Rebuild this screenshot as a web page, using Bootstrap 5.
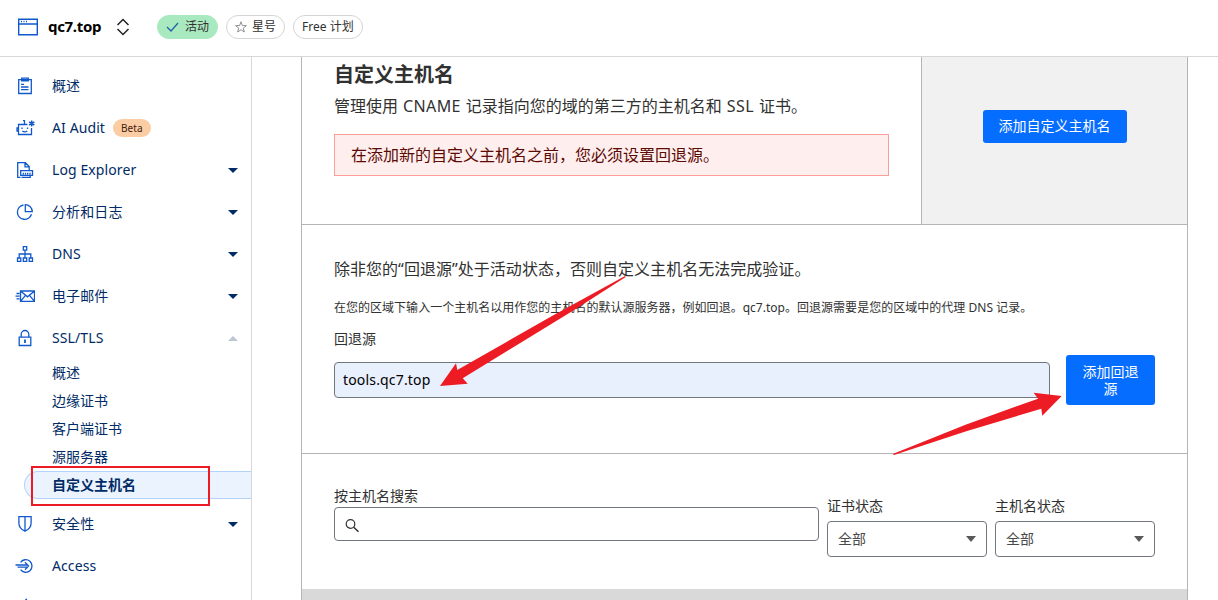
<!DOCTYPE html>
<html lang="zh-CN">
<head>
<meta charset="utf-8">
<meta name="viewport" content="width=device-width, initial-scale=1">
<title>qc7.top - 自定义主机名</title>
<link href="https://cdn.jsdelivr.net/npm/bootstrap@5.3.0/dist/css/bootstrap.min.css" rel="stylesheet">
<style>
  html, body { height: 100%; }
  body { font-family: "Noto Sans", "Noto Sans CJK SC", sans-serif; font-size: 14px; line-height: 20px; color: #313131; overflow: hidden; background: #fff; }
  svg { display: block; flex: none; }
  .ic { fill: none; stroke: #1159cb; stroke-width: 1.3; }
  .topbar { height: 57px; border-bottom: 1px solid #d5d7d8; padding: 0 0 3px 18px; flex: none; }
  .site-name { font-size: 15px; font-weight: 700; color: #000; margin-left: 10px; width: 54px; letter-spacing: -.32px; padding-bottom: 2px; }
  .switcher { margin-left: 14px; }
  .tags { margin-left: 27px; }
  .tag { height: 24px; border: 1px solid #d5d5d5; border-radius: 12px; font-size: 12px; line-height: 22px; font-weight: 400; color: #313131; padding: 0 8px; }
  .tag svg { margin-right: 5px; }
  .tag-on { background: #a9e9c0; border-color: #a9e9c0; }
  .side { width: 252px; border-right: 1px solid #d5d7d8; padding-top: 8px; flex: none; }
  .side-item { height: 42px; padding: 0 13px 0 15px; flex: none; text-decoration: none; color: #002b66; letter-spacing: .1px; }
  .side-item > span:first-of-type { margin-left: 17px; }
  .beta { background: #fbcda5; color: #43200a; font-size: 10px; line-height: 18px; border-radius: 9px; padding: 0 8px; margin-left: 8px; }
  .caret { width: 0; height: 0; border: 5px solid transparent; border-top-color: #002b66; border-bottom: 0; margin-left: auto; }
  .caret.up { border-top: 0; border-bottom: 5px solid #bcc6d4; }
  .sub-item { height: 28px; line-height: 28px; padding-left: 28px; margin-left: 24px; color: #002b66; text-decoration: none; display: block; }
  .sub-item.on { background: #ebf3fe; border: 1px solid #b3d3fb; border-right: 0; border-radius: 14px 0 0 14px; font-weight: 700; line-height: 25px; padding-left: 27px; }
  .panel { width: 887px; margin-left: 49px; border: solid #b5b5b5; border-width: 0 1px; flex: none; }
  .intro { height: 168px; border-bottom: 1px solid #b5b5b5; }
  .intro-text { width: 619px; padding: 3px 32px 0; }
  .intro-text h1 { font-size: 20px; line-height: 30px; font-weight: 700; margin: 0; }
  .intro-text p { font-size: 16px; line-height: 24px; margin: 4px 0 16px; word-spacing: .8px; }
  .intro-text p span { letter-spacing: .4px; }
  .warn { height: 42px; background: #ffeeee; border: 1px solid #fb9f98; color: #5b0a04; font-size: 16px; line-height: 40px; padding: 0 16px; }
  .intro-act { background: #f1f1f1; border-left: 1px solid #b5b5b5; padding-top: 53px; }
  .act { background: #056dff; border: 0; border-radius: 3px; color: #fff; font-size: 14px; line-height: 17px; padding: 8px 15px; }
  .intro-act .act { padding: 7px 16px 9px; width: 144px; padding-left: 0; padding-right: 0; }
  .origin { height: 229px; border-bottom: 1px solid #b5b5b5; padding: 32px 32px 0; }
  .origin-lead { font-size: 16px; line-height: 24px; margin: 0; letter-spacing: .03px; }
  .hint { font-size: 12px; line-height: 18px; margin: 18px 0 12px; white-space: nowrap; letter-spacing: .02px; }
  .origin-row { margin-top: 6px; }
  .field { border: 1px solid #72777d; border-radius: 4px; color: #000; font-size: 14px; padding: 0 8px; }
  .field:focus { box-shadow: none; }
  .field-origin { width: 716px; height: 36px; background: #e8effd; letter-spacing: .17px; padding-bottom: 1px; }
  .filters { height: 135px; padding: 32px 32px 0; }
  .field-search { width: 485px; height: 34px; margin-top: 1px; }
  .field-search svg { margin: 3px 0 0 2px; }
  .pick-col { margin-top: 10px; }
  .pick { width: 160px; height: 36px; color: #4a4a4a; padding: 0 10px; margin-top: 5px; }
  .pick .caret { border-width: 6px 5.5px 0; border-top-color: #595959; }
  .table-top { background: #d9d9d9; height: 40px; }
  .marks { position: absolute; left: 0; top: 0; pointer-events: none; }
</style>
</head>
<body class="d-flex flex-column">
<header class="topbar d-flex align-items-center">
  <svg class="ic" width="20" height="18" viewBox="0 0 20 18"><path d="M.7 1.2h18.6v15.600H.7zM.7 6h18.600M3 3.500h1M5.500 3.500h1M8 3.500h1" stroke-width="1.400"/></svg>
  <span class="site-name">qc7.top</span>
  <svg class="switcher" width="14" height="18" viewBox="0 0 14 18" fill="none" stroke="#222" stroke-width="1.5"><path d="M1.500 7 7 1.500 12.500 7M1.500 11 7 16.500 12.500 11"/></svg>
  <div class="tags d-flex gap-2">
    <span class="tag tag-on d-flex align-items-center"><svg width="14" height="12" viewBox="0 0 14 12" fill="none" stroke="#1c5fa8" stroke-width="1.2"><path d="M1 6l4 4 7-8"/></svg>活动</span>
    <span class="tag d-flex align-items-center"><svg width="12" height="12" viewBox="0 0 14 14" fill="none" stroke="#7d7d7d" stroke-width="1"><path d="M7 .9l1.600 4.400 4.700.1-3.700 2.900 1.300 4.500L7 10.200l-3.900 2.600 1.300-4.500L.7 5.400l4.700-.1z"/></svg>星号</span>
    <span class="tag">Free 计划</span>
  </div>
</header>

<div class="d-flex flex-grow-1 overflow-hidden">
  <nav class="side d-flex flex-column">
    <a class="side-item d-flex align-items-center" href="#"><svg class="ic" width="20" height="20" viewBox="0 0 20 20"><path d="M3.700 3.700h12.600v13.800H3.700zM6.700 2.200h6.600v2.600H6.700zM6 8.300h3M6 11h7.500M6 13.700h7.500"/></svg><span>概述</span></a>
    <a class="side-item d-flex align-items-center" href="#"><svg class="ic" width="20" height="20" viewBox="0 0 20 20"><path d="M12.500 6.500H3.500v10h13V10M9.500 6.500V2.500M8 2.700h2M3.200 10H2v3h1.200M7 9.500v1.600M12.500 9.500v1.600M7.300 13c1.500 1.100 3.500 1.100 5 0"/><path d="M16.700 2.500v6M14.100 4l5.200 3M19.300 4l-5.200 3" stroke-width="1.500"/></svg><span>AI Audit</span><span class="beta">Beta</span></a>
    <a class="side-item d-flex align-items-center" href="#"><svg class="ic" width="20" height="20" viewBox="0 0 20 20"><path d="M5.500 17.300H2.700V2.700h7.600l3.900 3.900V10M10 2.700v4.200h4.200M5.700 10.600h11.800v4.800H5.700zM6.500 17.300h8.700v-2M8.300 14.500v-1.700M10.500 14.500v-1.700M12.700 14.500v-1.700M15 14.500v-1.700"/></svg><span>Log Explorer</span><i class="caret"></i></a>
    <a class="side-item d-flex align-items-center" href="#"><svg class="ic" width="20" height="20" viewBox="0 0 20 20"><path d="M8.500 3a7.200 7.200 0 1 0 8 9.200M10.300 2.700v7h7a7 7 0 0 0-7-7z"/></svg><span>分析和日志</span><i class="caret"></i></a>
    <a class="side-item d-flex align-items-center" href="#"><svg class="ic" width="20" height="20" viewBox="0 0 20 20"><path d="M8.300 2.700h3.400v3.400H8.300zM2.500 14h3.300v3.300H2.500zM8.300 14h3.400v3.300H8.300zM14.200 14h3.300v3.300h-3.300zM10 6.200V14M4.200 14v-4h11.600v4"/></svg><span>DNS</span><i class="caret"></i></a>
    <a class="side-item d-flex align-items-center" href="#"><svg class="ic" width="20" height="20" viewBox="0 0 20 20"><path d="M5.500 5h14v10.300h-14zM5.500 5l7 5.800 7-5.800M5.500 15.300l5-6M19.500 15.300l-5-6M1.500 7.500h3M.5 10.200h4M1.500 12.800h3"/></svg><span>电子邮件</span><i class="caret"></i></a>
    <a class="side-item d-flex align-items-center" href="#"><svg class="ic" width="20" height="20" viewBox="0 0 20 20"><path d="M4.200 9.200h11.600v8.300H4.200zM6.200 9.200V6.300a3.800 3.800 0 0 1 7.600 0v2.900"/><path d="M10 11.600v3.400" stroke-width="1.800"/></svg><span>SSL/TLS</span><i class="caret up"></i></a>
    <div>
      <a class="sub-item" href="#">概述</a>
      <a class="sub-item" href="#">边缘证书</a>
      <a class="sub-item" href="#">客户端证书</a>
      <a class="sub-item" href="#">源服务器</a>
      <a class="sub-item on" href="#">自定义主机名</a>
    </div>
    <a class="side-item d-flex align-items-center mt-1" href="#"><svg class="ic" width="20" height="20" viewBox="0 0 20 20"><path d="M3.900 2.700h12.200v6.500c0 4-3 6.500-6.100 8-3.100-1.500-6.100-4-6.100-8zM10 2.700v14.500"/></svg><span>安全性</span><i class="caret"></i></a>
    <a class="side-item d-flex align-items-center" href="#"><svg class="ic" width="20" height="20" viewBox="0 0 20 20"><path d="M5.600 6.300a6.300 6.300 0 1 1 0 7.400M.5 9h12M2.500 11.200h10M10 6.300l3.500 3.800-3.500 3.700"/></svg><span>Access</span></a>
    <a class="side-item d-flex align-items-center" href="#"><svg class="ic" width="20" height="20" viewBox="0 0 20 20"><path d="M11.500 1 4 11h5l-1 7 7.500-10h-5z"/></svg></a>
  </nav>

  <main class="panel">
    <section class="intro d-flex">
      <div class="intro-text">
        <h1>自定义主机名</h1>
        <p>管理使用 <span>CNAME</span> 记录指向您的域的第三方的主机名和 <span>SSL</span> 证书。</p>
        <div class="warn">在添加新的自定义主机名之前，您必须设置回退源。</div>
      </div>
      <div class="intro-act flex-grow-1 text-center">
        <button class="btn act" type="button">添加自定义主机名</button>
      </div>
    </section>
    <section class="origin">
      <p class="origin-lead">除非您的“回退源”处于活动状态，否则自定义主机名无法完成验证。</p>
      <p class="hint">在您的区域下输入一个主机名以用作您的主机名的默认源服务器，例如回退。qc7.top。回退源需要是您的区域中的代理 DNS 记录。</p>
      <label class="d-block" for="origin">回退源</label>
      <div class="origin-row d-flex align-items-center gap-3">
        <input id="origin" class="form-control field field-origin flex-shrink-0" type="text" value="tools.qc7.top">
        <button class="btn act flex-grow-1" type="button">添加回退源</button>
      </div>
    </section>
    <section class="filters d-flex gap-2">
      <div>
        <div>按主机名搜索</div>
        <div class="field field-search d-flex align-items-center"><svg width="16" height="16" viewBox="0 0 16 16" fill="none" stroke="#333" stroke-width="1.2"><circle cx="5.500" cy="6" r="4.300"/><path d="M8.700 9.200l4.800 4.600" stroke-width="1.500"/></svg></div>
      </div>
      <div class="pick-col">
        <div>证书状态</div>
        <div class="field pick d-flex align-items-center"><span>全部</span><i class="caret"></i></div>
      </div>
      <div class="pick-col">
        <div>主机名状态</div>
        <div class="field pick d-flex align-items-center"><span>全部</span><i class="caret"></i></div>
      </div>
    </section>
    <div class="table-top"></div>
  </main>
</div>

<svg class="marks" width="1218" height="600" viewBox="0 0 1218 600" fill="#ed1c24">
  <rect x="32" y="467" width="177" height="38" fill="none" stroke="#ed1c24" stroke-width="2"/>
  <path d="M440 386l16-22.700 1.300 6.700L552 316 625 276l.7 1L575 309.500l-112.300 68.800 5 5.400z"/>
  <path d="M1061.700 396l-28-3.300 4.300 6-72.500 26L892.700 454l1.300 1 71.500-23.500 75.800-22.800 1 7z"/>
</svg>
<script src="https://cdn.jsdelivr.net/npm/bootstrap@5.3.0/dist/js/bootstrap.bundle.min.js"></script>
</body>
</html>
